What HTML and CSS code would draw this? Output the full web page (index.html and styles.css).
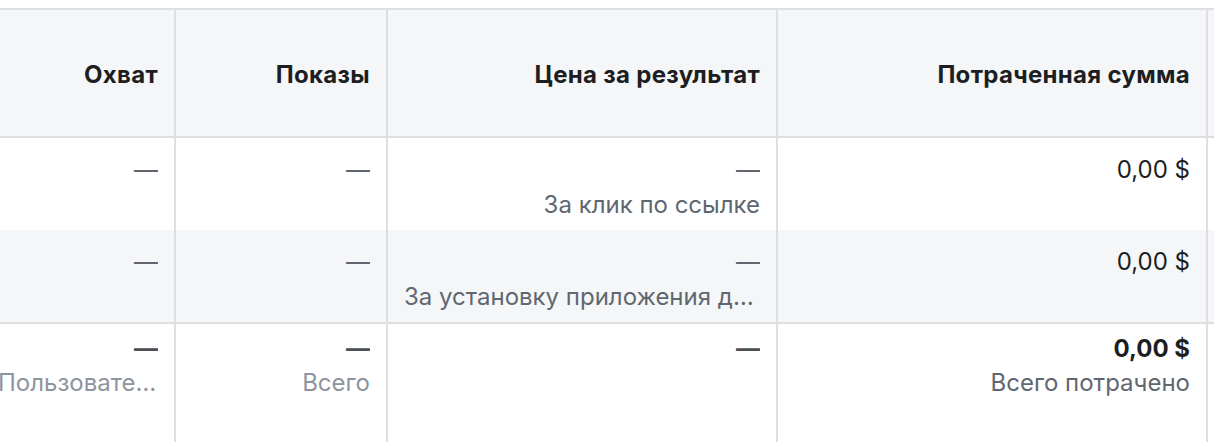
FILE: index.html
```html
<!DOCTYPE html>
<html lang="ru">
<head>
<meta charset="utf-8">
<title>Таблица</title>
<link rel="stylesheet" href="styles.css">
</head>
<body>
<div class="table">
  <div class="row head">
    <div class="cell">Охват</div>
    <div class="cell">Показы</div>
    <div class="cell">Цена за результат</div>
    <div class="cell">Потраченная сумма</div>
    <div class="cell last"></div>
  </div>
  <div class="row body">
    <div class="cell"><div class="line dash">—</div></div>
    <div class="cell"><div class="line dash">—</div></div>
    <div class="cell"><div class="line dash">—</div><div class="line sub">За клик по ссылке</div></div>
    <div class="cell"><div class="line val">0,00 $</div></div>
    <div class="cell last"></div>
  </div>
  <div class="row body alt">
    <div class="cell"><div class="line dash">—</div></div>
    <div class="cell"><div class="line dash">—</div></div>
    <div class="cell"><div class="line dash">—</div><div class="line sub">За установку приложения для мобильных устройств</div></div>
    <div class="cell"><div class="line val">0,00 $</div></div>
    <div class="cell last"></div>
  </div>
  <div class="row total">
    <div class="cell"><div class="line tdash">—</div><div class="line tsub">Пользователи в Аккаунтском центре</div></div>
    <div class="cell"><div class="line tdash">—</div><div class="line tsub">Всего</div></div>
    <div class="cell"><div class="line tdash">—</div></div>
    <div class="cell"><div class="line tval">0,00 $</div><div class="line sub">Всего потрачено</div></div>
    <div class="cell last"></div>
  </div>
</div>
</body>
</html>
```
FILE: styles.css
```css
html, body {
  margin: 0;
  padding: 0;
  background: #ffffff;
}

body {
  font-family: Inter, "Liberation Sans", Arial, sans-serif;
  font-size: 24px;
  color: #1c1e21;
  overflow: hidden;
}

.table {
  margin: 8px 0 0 -18px;
  border-top: 2px solid #dddfe2;
}

.row {
  display: grid;
  grid-template-columns: 194px 212px 390px 430px 1fr;
}

.cell {
  min-width: 0;
  padding: 0 16px;
  text-align: right;
  border-right: 2px solid #dddfe2;
}

.cell.last {
  border-right: none;
}

.head {
  background: #f5f6f7;
  border-bottom: 2px solid #dddfe2;
}

.head .cell {
  height: 126px;
  box-sizing: border-box;
  padding-top: 49px;
  line-height: 32px;
  font-weight: 700;
  letter-spacing: 0.3px;
  white-space: nowrap;
  color: #1c1e21;
}

.body .cell {
  height: 92px;
  box-sizing: border-box;
  padding-top: 14px;
}

.alt {
  background: #f5f6f7;
  border-bottom: 2px solid #dddfe2;
}

.line {
  line-height: 35px;
  white-space: nowrap;
  overflow: hidden;
  text-overflow: ellipsis;
}

.dash {
  color: #606770;
}

.val {
  color: #1c1e21;
}

.sub {
  color: #606770;
}

.total .cell {
  height: 120px;
  box-sizing: border-box;
  padding-top: 8px;
}

.total .line {
  line-height: 34px;
}

.tdash {
  color: #4b4f56;
  font-weight: 700;
}

.tval {
  color: #1c1e21;
  font-weight: 700;
}

.tsub {
  color: #8d949e;
}
```
